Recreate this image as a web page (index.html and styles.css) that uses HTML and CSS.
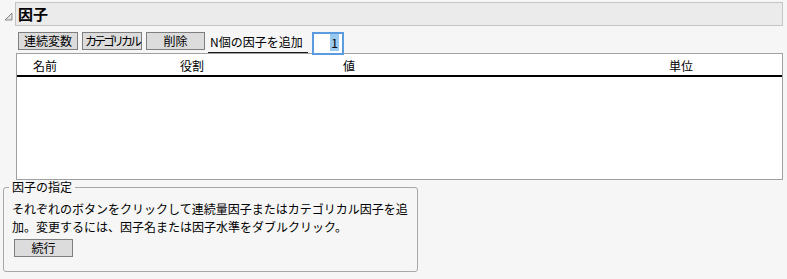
FILE: index.html
```html
<!DOCTYPE html>
<html lang="ja">

<head>
    <meta charset="UTF-8">
    <title>因子</title>
    <link rel="stylesheet" href="styles.css">
</head>

<body>
    <div class="outline">
        <svg class="outline-toggle" width="9" height="9" viewBox="0 0 9 9">
            <polygon points="8,1 8,8 1,8" fill="#e0e0e0" stroke="#8a8a8a" stroke-width="1" />
        </svg>
        <div class="outline-title">因子</div>
    </div>

    <div class="factor-body">
        <div class="toolbar">
            <button class="btn">連続変数</button>
            <button class="btn btn-tight">カテゴリカル</button>
            <button class="btn btn-narrow">削除</button>
            <div class="add-label">N個の因子を追加</div>
            <div class="add-count"><span class="sel">1</span></div>
        </div>

        <div class="factor-table">
            <div class="table-head">
                <span>名前</span>
                <span>役割</span>
                <span>値</span>
                <span>単位</span>
            </div>
        </div>
    </div>

    <!-- 因子の指定 -->
    <fieldset class="hint">
        <legend>因子の指定</legend>
        <p>それぞれのボタンをクリックして連続量因子またはカテゴリカル因子を追加。変更するには、因子名または因子水準をダブルクリック。</p>
        <button class="btn btn-go">続行</button>
    </fieldset>
</body>

</html>
```

FILE: styles.css
```css
* {
    margin: 0;
    padding: 0;
    box-sizing: border-box;
}

body {
    background: #f6f6f6;
    font-family: "Noto Sans CJK JP", "Noto Sans", sans-serif;
    font-size: 12px;
    line-height: 18px;
    color: #000000;
}

/* 見出し行 */
.outline {
    display: flex;
    align-items: center;
    padding: 2px 4px 0 4px;
}

.outline-toggle {
    width: 9px;
    height: 9px;
    margin: 4px 2px 0 0;
}

.outline-title {
    flex: 1;
    height: 24px;
    line-height: 22px;
    padding-left: 2px;
    background: #ebebeb;
    border: #c4c4c4 solid 1px;
    font-size: 15px;
    font-weight: bold;
}

.factor-body {
    padding: 6px 4px 0 16px;
}

/* ボタン類 */
.btn {
    display: block;
    flex-shrink: 0;
    width: 60px;
    height: 18px;
    padding: 0;
    background: #dcdcdc;
    border: #7f7f7f solid 1px;
    font-family: inherit;
    font-size: 12px;
    line-height: 16px;
    color: #000000;
    white-space: nowrap;
}

.btn-tight {
    letter-spacing: -3px;
    text-align: left;
    padding-left: 2px;
}

.btn-narrow {
    width: 59px;
}

.toolbar {
    display: flex;
    align-items: flex-start;
    gap: 4px;
    height: 21px;
    padding-left: 2px;
}

.add-label {
    width: 100px;
    height: 21px;
    line-height: 20px;
    margin-left: -1px;
    padding-left: 2px;
    border-bottom: #1a1a1a solid 1px;
}

.add-count {
    position: relative;
    z-index: 1;
    width: 32px;
    height: 23px;
    padding-right: 3px;
    background: #ffffff;
    border: #5b9ce0 solid 2px;
    text-align: right;
    line-height: 17px;
}

.sel {
    background: #99c9ef;
    padding: 0 1px;
}

/* 一覧表 */
.factor-table {
    height: 127px;
    background: #ffffff;
    border: #a0a0a0 solid 1px;
}

.table-head {
    display: grid;
    grid-template-columns: 147px 163px 326px 1fr;
    height: 23px;
    padding: 3px 0 0 16px;
    border-bottom: #000000 solid 2px;
}

/* 因子の指定 */
.hint {
    width: 415px;
    margin: -1px 0 0 3px;
    padding: 5px 4px 14px 8px;
    border: #a8a8a8 solid 1px;
    border-radius: 3px;
}

.hint legend {
    margin-left: -3px;
    padding: 0 3px;
    line-height: 16px;
}

.hint p {
    line-height: 18px;
}

.btn-go {
    width: 59px;
    margin: 3px 0 0 2px;
}
```
